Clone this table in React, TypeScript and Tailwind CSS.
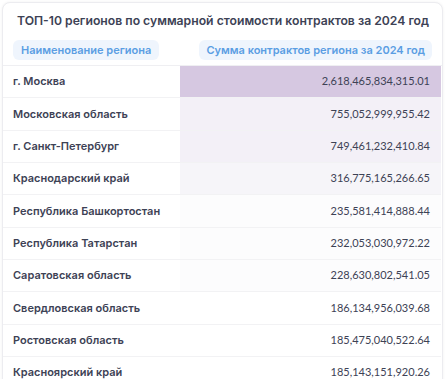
const ROWS: { name: string; sum: string; bg: string }[] = [
  { name: 'г. Москва', sum: '2,618,465,834,315.01', bg: 'bg-[#d6c8e1]' },
  { name: 'Московская область', sum: '755,052,999,955.42', bg: 'bg-[#f3f0f7]' },
  { name: 'г. Санкт-Петербург', sum: '749,461,232,410.84', bg: 'bg-[#f3f0f7]' },
  { name: 'Краснодарский край', sum: '316,775,165,266.65', bg: 'bg-[#f6f5f9]' },
  { name: 'Республика Башкортостан', sum: '235,581,414,888.44', bg: 'bg-[#fcfcfd]' },
  { name: 'Республика Татарстан', sum: '232,053,030,972.22', bg: 'bg-[#fcfcfd]' },
  { name: 'Саратовская область', sum: '228,630,802,541.05', bg: 'bg-[#fcfcfd]' },
  { name: 'Свердловская область', sum: '186,134,956,039.68', bg: 'bg-white' },
  { name: 'Ростовская область', sum: '185,475,040,522.64', bg: 'bg-white' },
  { name: 'Красноярский край', sum: '185,143,151,920.26', bg: 'bg-white' },
]

export default function App() {
  return (
    <div className="w-[446px] h-[379px] overflow-hidden bg-white p-[2px] pr-[3px]">
      <div
        className="h-[400px] rounded-lg border border-[#ececf0] bg-white shadow-[0_0_3px_rgba(0,0,0,0.06)]"
        style={{ fontFamily: 'Inter, "Noto Sans", sans-serif' }}
      >
        {/* Title */}
        <h2 className="px-[14px] pt-[9px] text-[12.2px] font-semibold leading-[17px] text-[#3d4255] whitespace-nowrap">
          ТОП-10 регионов по суммарной стоимости контрактов за 2024 год
        </h2>

        {/* Header */}
        <div className="flex items-center justify-between px-[10px] pt-[11px] pb-[5px] border-b border-[#efeff2]">
          <span className="rounded-md bg-[#eff5fd] px-[8px] py-[3px] text-[11px] font-semibold leading-[14px] text-[#5b9ee3]">
            Наименование региона
          </span>
          <span className="rounded-md bg-[#eff5fd] px-[7px] py-[3px] text-[11px] font-semibold leading-[14px] text-[#5b9ee3]">
            Сумма контрактов региона за 2024 год
          </span>
        </div>

        {/* Rows */}
        <div className="pr-[1px]">
          {ROWS.map(r => (
            <div key={r.name} className="flex h-[32.33px] border-b border-[#f2f2f4]">
              <div className="w-[177px] shrink-0 flex items-center pl-[10px] text-[11px] font-semibold text-[#3d4255] whitespace-nowrap">
                {r.name}
              </div>
              <div
                className={`flex-1 flex items-center justify-end pr-[11px] text-[11px] text-[#3d4255] ${r.bg}`}
                style={{ fontFamily: 'Lato, sans-serif' }}
              >
                {r.sum}
              </div>
            </div>
          ))}
        </div>
      </div>
    </div>
  )
}
